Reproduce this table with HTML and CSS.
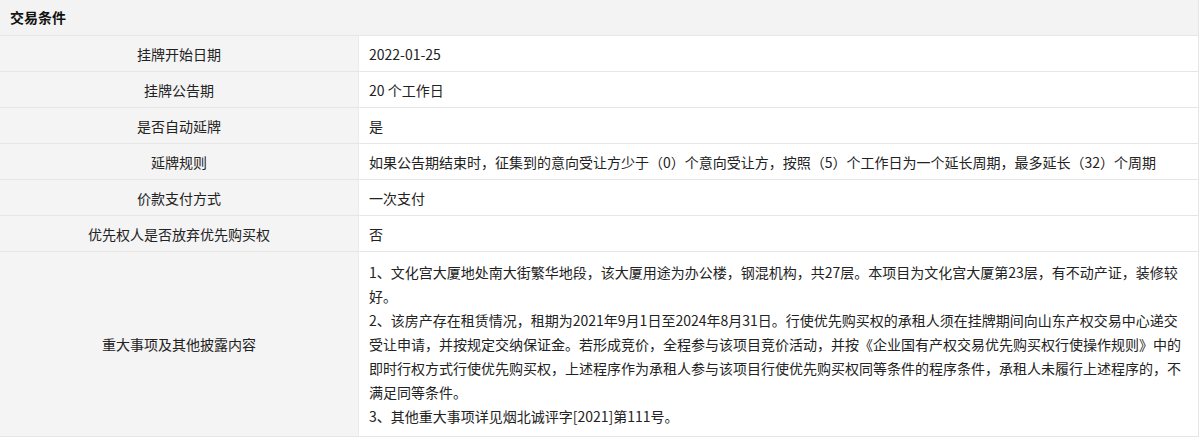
FILE: index.html
```html
<!DOCTYPE html>
<html lang="zh-CN">
<head>
    <meta charset="UTF-8">
    <meta name="viewport" content="width=device-width, initial-scale=1.0">
    <title>交易条件</title>
    <link rel="stylesheet" href="styles.css">
</head>
<body>

    <div class="panel">
        <div class="panel-title">交易条件</div>

        <table class="info">
            <tr>
                <th>挂牌开始日期</th>
                <td>2022-01-25</td>
            </tr>
            <tr>
                <th>挂牌公告期</th>
                <td>20 个工作日</td>
            </tr>
            <tr>
                <th>是否自动延牌</th>
                <td>是</td>
            </tr>
            <tr>
                <th>延牌规则</th>
                <td>如果公告期结束时，征集到的意向受让方少于（0）个意向受让方，按照（5）个工作日为一个延长周期，最多延长（32）个周期</td>
            </tr>
            <tr>
                <th>价款支付方式</th>
                <td>一次支付</td>
            </tr>
            <tr>
                <th>优先权人是否放弃优先购买权</th>
                <td>否</td>
            </tr>
            <tr>
                <th>重大事项及其他披露内容</th>
                <td class="long">1、文化宫大厦地处南大街繁华地段，该大厦用途为办公楼，钢混机构，共27层。本项目为文化宫大厦第23层，有不动产证，装修较好。<br>2、该房产存在租赁情况，租期为2021年9月1日至2024年8月31日。行使优先购买权的承租人须在挂牌期间向山东产权交易中心递交受让申请，并按规定交纳保证金。若形成竞价，全程参与该项目竞价活动，并按《企业国有产权交易优先购买权行使操作规则》中的即时行权方式行使优先购买权，上述程序作为承租人参与该项目行使优先购买权同等条件的程序条件，承租人未履行上述程序的，不满足同等条件。<br>3、其他重大事项详见烟北诚评字[2021]第111号。</td>
            </tr>
        </table>
    </div>

</body>
</html>
```

FILE: styles.css
```css
body{
    margin: 0;
    background-color: #fff;
    font-family: "Noto Sans CJK SC", "Liberation Sans", sans-serif;
    font-size: 14px;
    color: #222;
}

.panel{
    width: 1199px;
    border-right: 1px solid #e6e6e6;
    box-sizing: border-box;
}

.panel-title{
    height: 35px;
    line-height: 35px;
    padding-left: 10px;
    background-color: #f3f3f3;
    font-weight: bold;
    color: #111;
    border-bottom: 1px solid #e6e6e6;
}

.info{
    width: 100%;
    border-collapse: collapse;
}

.info th{
    width: 358px;
    background-color: #f4f4f4;
    font-weight: normal;
    text-align: center;
    border-bottom: 1px solid #e6e6e6;
    border-right: 1px solid #ebebeb;
    height: 35px;
    padding: 0;
}

.info td{
    height: 35px;
    padding: 0 10px;
    border-bottom: 1px solid #e6e6e6;
    background-color: #fff;
}

.info td.long{
    padding: 8px 12px 8px 10px;
    line-height: 24px;
}
```
